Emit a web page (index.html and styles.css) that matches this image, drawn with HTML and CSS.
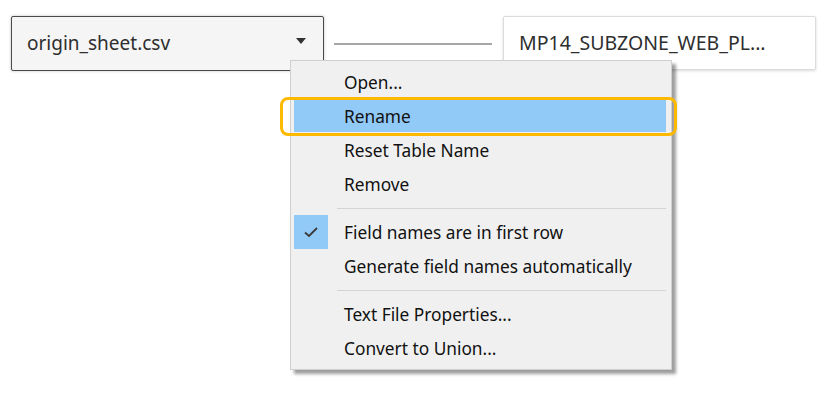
FILE: index.html
```html
<!DOCTYPE html>
<html>
<head>
<meta charset="utf-8">
<link rel="stylesheet" href="styles.css">
</head>
<body>
<div class="canvas">
  <div class="toprow">
    <div class="tablebox selected">
      <span class="tname">origin_sheet.csv</span>
      <span class="caret"></span>
    </div>
    <div class="connector"></div>
    <div class="tablebox plain">
      <span class="tname">MP14_SUBZONE_WEB_PL...</span>
    </div>
  </div>

  <div class="menu">
    <div class="item"><span class="label">Open...</span></div>
    <div class="item active"><span class="label">Rename</span></div>
    <div class="item"><span class="label">Reset Table Name</span></div>
    <div class="item"><span class="label">Remove</span></div>
    <div class="sep"></div>
    <div class="item">
      <span class="check">
        <svg width="16" height="12" viewBox="0 0 16 12"><path d="M2 6.5 L6 10 L14 2" fill="none" stroke="#3a3a3a" stroke-width="1.8"/></svg>
      </span>
      <span class="label">Field names are in first row</span>
    </div>
    <div class="item"><span class="label">Generate field names automatically</span></div>
    <div class="sep"></div>
    <div class="item"><span class="label">Text File Properties...</span></div>
    <div class="item"><span class="label">Convert to Union...</span></div>
    <div class="focusring"></div>
  </div>
</div>
</body>
</html>
```

FILE: styles.css
```css
html, body {
  margin: 0;
  padding: 0;
  background: #ffffff;
}

.canvas {
  position: relative;
  width: 837px;
  height: 413px;
  font-family: "Noto Sans", "Open Sans", sans-serif;
}

.toprow {
  display: flex;
  align-items: flex-start;
  padding: 16px 0 0 11px;
}

.tablebox {
  box-sizing: border-box;
  width: 313px;
  display: flex;
  align-items: center;
  padding: 0 0 0 15px;
  font-size: 19px;
  color: #2e2e2e;
}

.tablebox.selected {
  height: 55px;
  background: #f5f5f5;
  border: 1px solid #4a4a4a;
  border-radius: 2px;
  box-shadow: 0 0 3px rgba(0, 0, 0, 0.25);
}

.tablebox.plain {
  height: 54px;
  background: #ffffff;
  border: 1px solid #dcdcdc;
  border-radius: 2px;
  box-shadow: 0 1px 3px rgba(0, 0, 0, 0.15);
  font-size: 19.5px;
}

.tname {
  flex: 1;
  white-space: nowrap;
  position: relative;
  top: -1px;
}

.caret {
  width: 0;
  height: 0;
  border-left: 5.5px solid transparent;
  border-right: 5.5px solid transparent;
  border-top: 6px solid #333333;
  margin-right: 17px;
  position: relative;
  top: -3px;
}

.connector {
  width: 158px;
  height: 2px;
  background: #a6a6a6;
  margin: 27px 11px 0 10px;
}

.menu {
  position: absolute;
  left: 290px;
  top: 60px;
  box-sizing: border-box;
  width: 382px;
  height: 310px;
  background: #f0f0f0;
  border: 1px solid #cfcfcf;
  box-shadow: 4px 4px 3px rgba(0, 0, 0, 0.38);
  padding: 4px 5px 4px 3px;
  font-size: 17.3px;
  color: #111111;
}

.item {
  height: 34px;
  display: flex;
  align-items: center;
  position: relative;
}

.item.active::before {
  content: "";
  position: absolute;
  left: 0;
  right: 0;
  top: 1px;
  bottom: 1px;
  background: #91c9f7;
}

.label {
  position: relative;
  padding-left: 50px;
  white-space: nowrap;
}

.check {
  position: absolute;
  left: 0;
  top: 0;
  width: 34px;
  height: 34px;
  background: #91c9f7;
  display: flex;
  align-items: center;
  justify-content: center;
}

.sep {
  height: 14px;
  display: flex;
  align-items: center;
  padding-left: 43px;
}

.sep::after {
  content: "";
  flex: 1;
  height: 1px;
  background: #d4d4d4;
}

.focusring {
  position: absolute;
  left: -11px;
  top: 36px;
  width: 397px;
  height: 39px;
  box-sizing: border-box;
  border: 3px solid #fcb900;
  border-radius: 8px;
}
```
